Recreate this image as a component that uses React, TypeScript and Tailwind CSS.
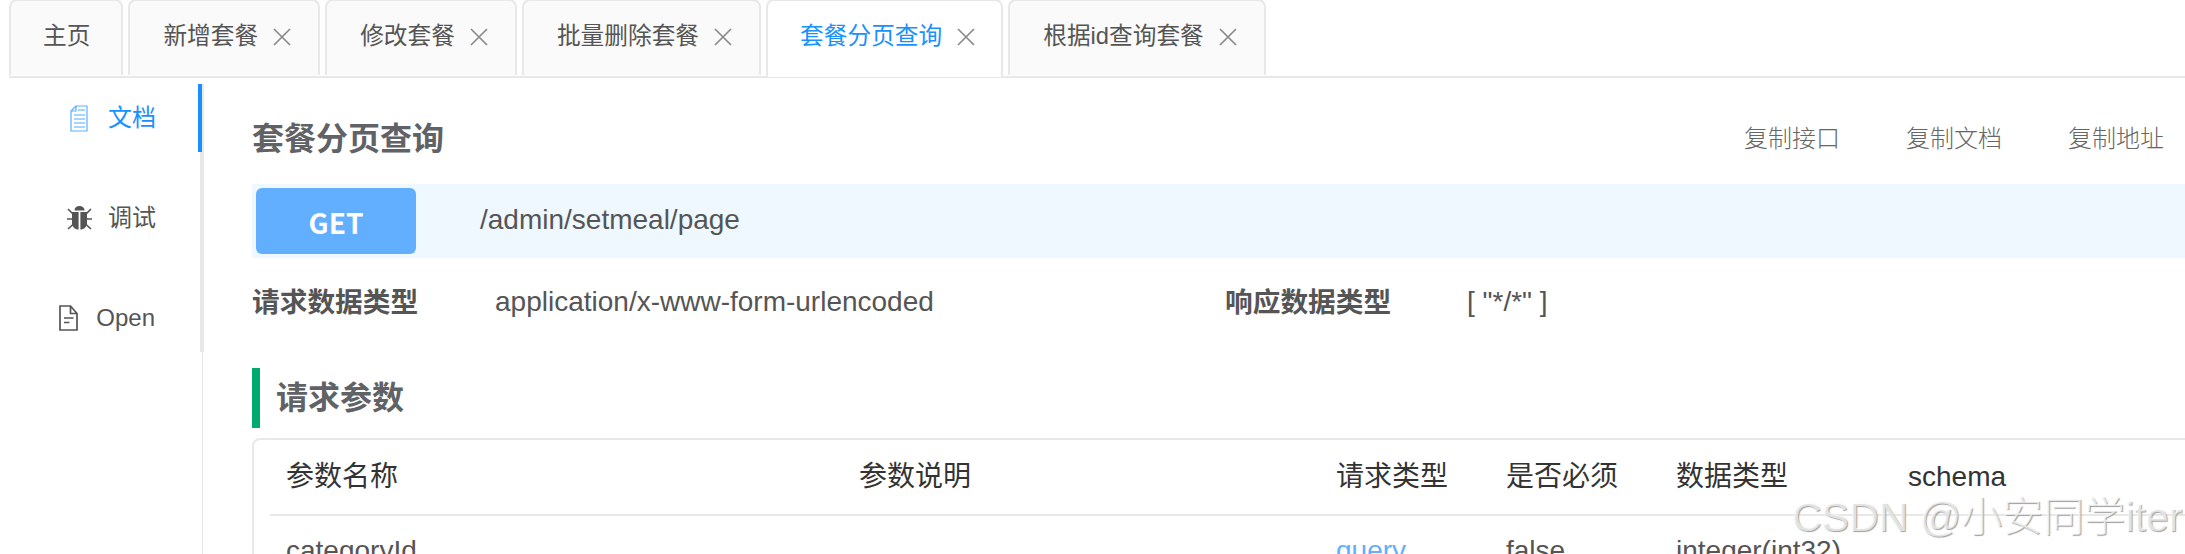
const font = "[font-family:'Liberation_Sans','Noto_Sans_CJK_SC',sans-serif]";

function Close() {
  return (
    <svg width="18" height="18" viewBox="0 0 18 18" className="ml-[15px] shrink-0" aria-hidden>
      <path d="M1 1 L17 17 M17 1 L1 17" stroke="#8a8a8a" strokeWidth="1.7" fill="none" />
    </svg>
  );
}

function Tab({ label, active, closable = true }: { label: string; active?: boolean; closable?: boolean }) {
  return (
    <div
      className={
        active
          ? "flex items-center h-[78px] pl-[32px] pr-[26px] pb-[4px] bg-white border-2 border-b-0 border-[#e8e8e8] rounded-t-[8px] text-[23.7px] text-[#1890ff] -mt-[1px]"
          : closable
          ? "flex items-center h-[76px] pl-[33px] pr-[27px] pb-[2px] bg-[#fafafa] border-2 border-b-0 border-[#e8e8e8] rounded-t-[8px] text-[23.7px] text-[#555555] -mt-[1px]"
          : "flex items-center h-[76px] pl-[32px] pr-[31px] pb-[2px] bg-[#fafafa] border-2 border-b-0 border-[#e8e8e8] rounded-t-[8px] text-[23.7px] text-[#555555] -mt-[1px]"
      }
    >
      <span className="whitespace-nowrap">{label}</span>
      {closable && <Close />}
    </div>
  );
}

function DocIcon() {
  return (
    <svg width="18" height="27" viewBox="0 0 18 27" fill="none" aria-hidden>
      <path d="M6 1 H17 V26 H1 V6 Z M6 1 V6 H1" stroke="#5bb0ff" strokeWidth="1.2" strokeLinejoin="round" />
      <path d="M8 5 H15" stroke="#8cc8ff" strokeWidth="1.6" />
      <path d="M4 10 H15 M4 14 H15 M4 18 H15 M4 22 H15" stroke="#8cc8ff" strokeWidth="1.6" />
    </svg>
  );
}

function BugIcon() {
  return (
    <svg width="25" height="24" viewBox="8 7 25 24" fill="none" aria-hidden>
      <path d="M15.5 11.5 C15.5 8.5 17.5 7 20.5 7 C23.5 7 25.5 8.5 25.5 11.5 Z" fill="#555555" />
      <path d="M13 13 H19.6 V30.5 C16 30.5 13 28 13 24 Z M21.4 13 H28 V24 C28 28 25 30.5 21.4 30.5 Z" fill="#555555" />
      <path d="M9 10 L14 15 M32 10 L27 15 M8 20 H14 M27 20 H33 M9 30 L14.5 25 M32 30 L26.5 25" stroke="#555555" strokeWidth="1.6" />
    </svg>
  );
}

function OpenIcon() {
  return (
    <svg width="19" height="26" viewBox="0 0 19 26" fill="none" aria-hidden>
      <path d="M1 1 H11.5 L18 8.5 V25 H1 Z M11.5 1 V8.5 H18" stroke="#555555" strokeWidth="1.7" strokeLinejoin="miter" />
      <path d="M5 13 H14.5 M5 17.5 H10.5" stroke="#555555" strokeWidth="1.6" />
    </svg>
  );
}

function Row({ cells, header }: { cells: string[]; header?: boolean }) {
  const cols = ["w-[573px]", "w-[477px]", "w-[170px]", "w-[170px]", "w-[232px]", "w-[200px]"];
  return (
    <div
      className={
        header
          ? "flex items-center h-[76px] pl-[16px] ml-[16px] border-b-2 border-[#e8e8e8] text-[28px] text-[#333333]"
          : "flex items-center h-[70px] pl-[16px] ml-[16px] text-[28px] text-[#555555]"
      }
    >
      {cells.map((c, i) => (
        <div
          key={i}
          className={`${cols[i]} whitespace-nowrap ${!header && c === "query" ? "text-[#61affe]" : ""}`}
        >
          {c}
        </div>
      ))}
    </div>
  );
}

export default function App() {
  return (
    <div className={`relative w-[2185px] h-[554px] overflow-hidden bg-white ${font}`}>
      <div className="flex gap-[5px] h-[78px] ml-[9px] border-b-2 border-[#e8e8e8]">
        <Tab label="主页" closable={false} />
        <Tab label="新增套餐" />
        <Tab label="修改套餐" />
        <Tab label="批量删除套餐" />
        <Tab label="套餐分页查询" active />
        <Tab label="根据id查询套餐" />
      </div>

      <div className="flex h-[476px]">
        <aside className="w-[203px] shrink-0 border-r border-[#e8e8e8] mt-[6px]">
          <nav className="w-[204px] h-[268px] border-r-4 border-[#e8e8e8] flex flex-col gap-[32px]">
            <div className="w-[202px] h-[68px] border-r-4 border-[#1890ff] flex items-center justify-end pr-[42px] gap-[20px] text-[24px] text-[#1890ff]">
              <DocIcon />
              <span>文档</span>
            </div>
            <div className="w-[200px] h-[68px] flex items-center justify-end pr-[44px] gap-[16px] text-[24px] text-[#555555]">
              <BugIcon />
              <span>调试</span>
            </div>
            <div className="w-[200px] h-[68px] flex items-center justify-end pr-[45px] gap-[18px] text-[24px] text-[#555555]">
              <OpenIcon />
              <span>Open</span>
            </div>
          </nav>
        </aside>

        <main className="flex-1 min-w-0 pl-[49px] pt-[26px] overflow-hidden">
          <div className="flex items-center justify-between h-[68px] pr-[21px] mb-[12px]">
            <div className="pt-[2px] text-[32px] font-bold text-[#606266]">套餐分页查询</div>
            <div className="flex gap-[66px] pt-[2px] text-[24px] font-light text-[#666666]">
              <span>复制接口</span>
              <span>复制文档</span>
              <span>复制地址</span>
            </div>
          </div>

          <div className="flex items-center h-[74px] p-[4px] bg-[#eff7ff]">
            <div className="w-[160px] h-[66px] pt-[2px] flex items-center justify-center rounded-[6px] bg-[#61affe] text-white font-bold text-[28px] [font-family:'Noto_Sans_CJK_SC',sans-serif]">
              GET
            </div>
            <div className="ml-[64px] pb-[2px] text-[28px] text-[#555555]">/admin/setmeal/page</div>
          </div>

          <div className="flex items-center h-[40px] mt-[24px] text-[28px] text-[#555555]">
            <div className="w-[243px] pt-[2px] text-[27.7px] font-bold">请求数据类型</div>
            <div className="w-[730px]">application/x-www-form-urlencoded</div>
            <div className="w-[242px] pt-[2px] text-[27.7px] font-bold">响应数据类型</div>
            <div>[ "*/*" ]</div>
          </div>

          <div className="flex items-center h-[60px] mt-[46px] border-l-8 border-[#00ab6d] pl-[16px] text-[32px] font-bold text-[#606266]">
            请求参数
          </div>

          <div className="w-[2100px] mt-[10px] border-2 border-[#e8e8e8] rounded-[8px]">
            <Row header cells={["参数名称", "参数说明", "请求类型", "是否必须", "数据类型", "schema"]} />
            <Row cells={["categoryId", "", "query", "false", "integer(int32)", ""]} />
          </div>
        </main>
      </div>

      <div className="absolute left-[1792px] top-[487px] text-[41px] font-light whitespace-nowrap text-[#ffffff]/70 [text-shadow:1px_1px_1px_#a0a0a0]">
        CSDN @小安同学iter
      </div>
    </div>
  );
}
